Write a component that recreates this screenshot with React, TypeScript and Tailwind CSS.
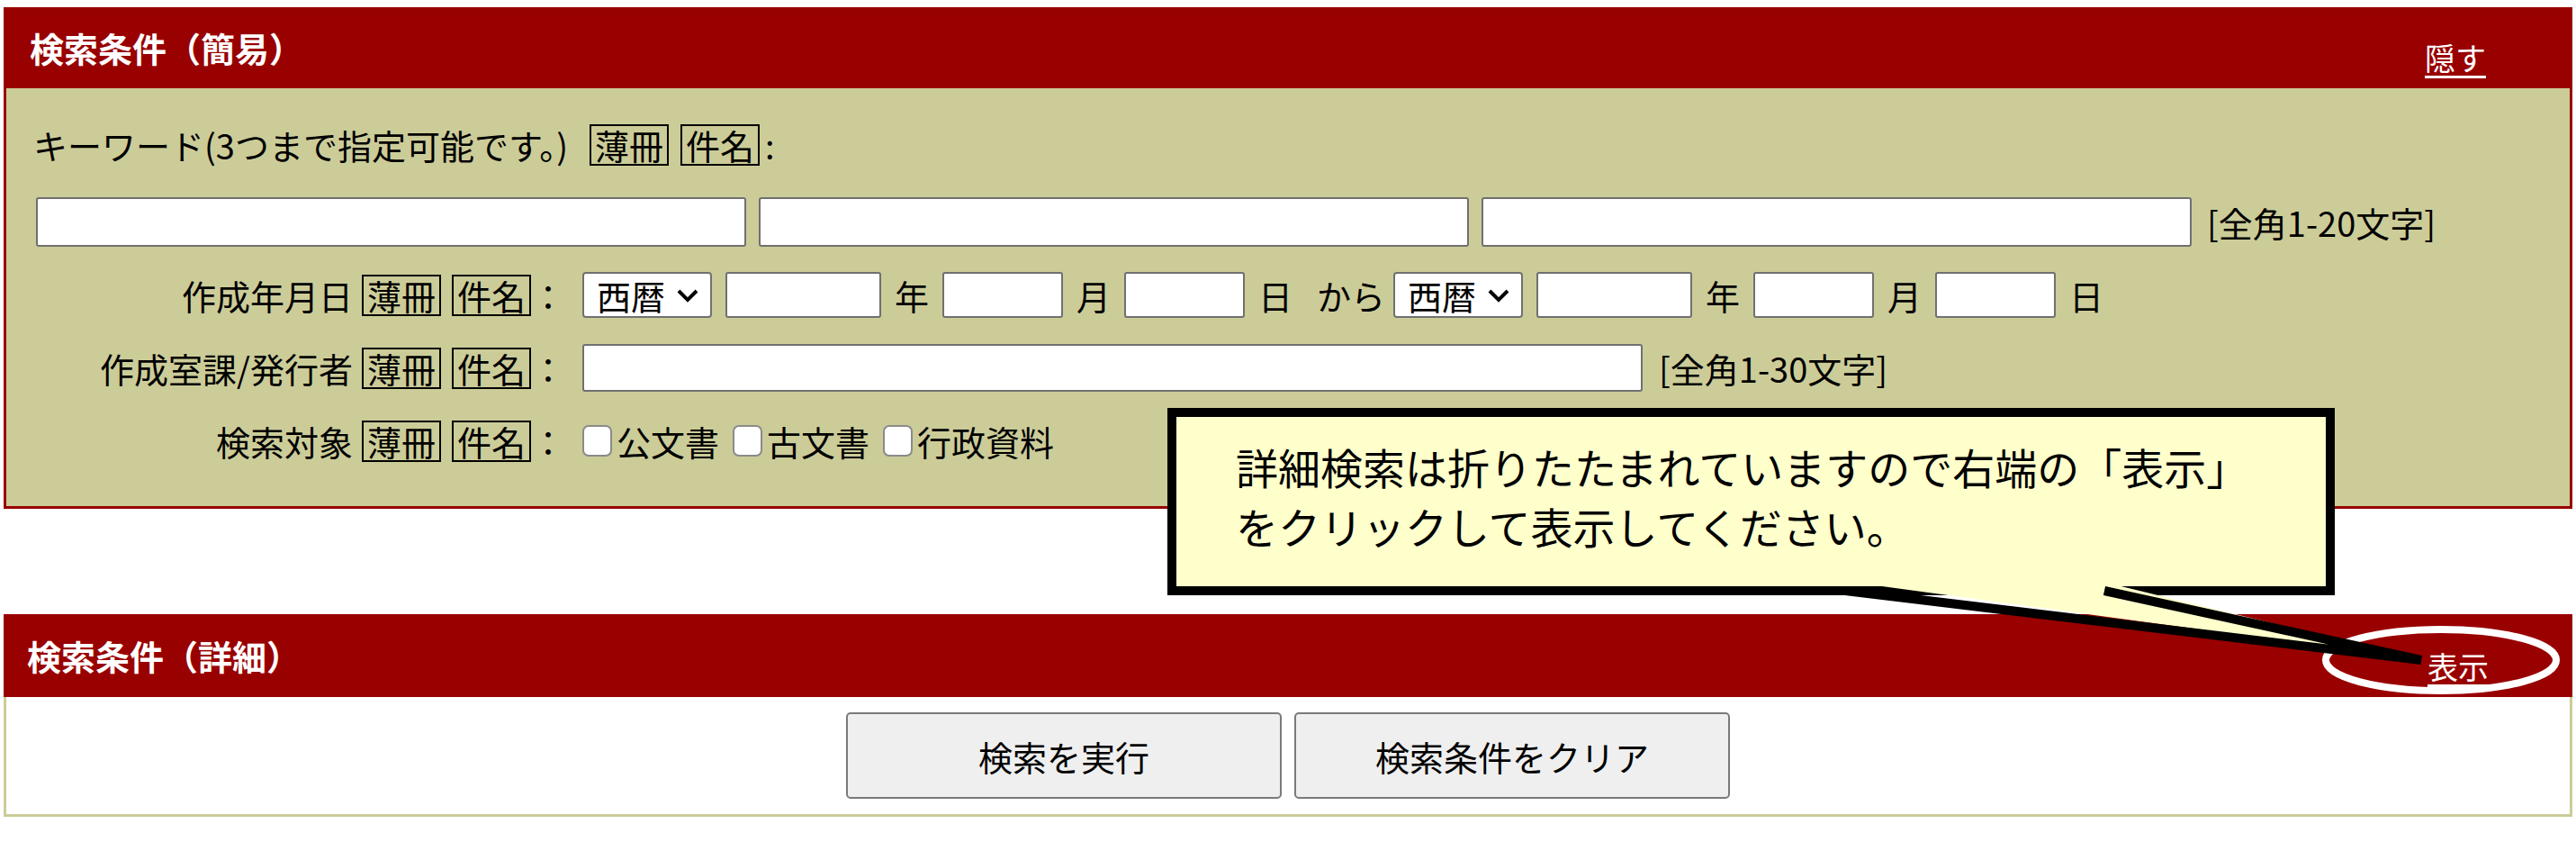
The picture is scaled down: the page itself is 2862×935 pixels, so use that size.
import React from "react";

const Tag = ({ children }: { children: React.ReactNode }) => (
  <span className="inline-flex h-[46px] items-center border-2 border-black px-[4px] leading-none">
    {children}
  </span>
);

const Field = ({ w, h = "h-[51px]" }: { w: string; h?: string }) => (
  <input
    type="text"
    className={`${w} ${h} rounded-[3px] border-2 border-[#707070] bg-white px-2 outline-none`}
  />
);

const Era = () => (
  <div className="flex h-[51px] w-[144px] items-center justify-between rounded-[4px] border-2 border-[#707070] bg-white pl-[14px] pr-[12px]">
    <span>西暦</span>
    <svg width="26" height="18" viewBox="0 0 26 18">
      <path d="M3 4 L13 14 L23 4" fill="none" stroke="#000" strokeWidth="4" />
    </svg>
  </div>
);

const Check = ({ label }: { label: string }) => (
  <label className="flex items-center">
    <span className="h-[35px] w-[33px] rounded-[7px] border-2 border-[#8a8a8a] bg-white" />
    <span className="ml-[5px]">{label}</span>
  </label>
);

const RowLabel = ({ text }: { text: string }) => (
  <div className="flex w-[621px] items-center justify-end">
    <span>{text}</span>
    <span className="ml-[10px]">
      <Tag>薄冊</Tag>
    </span>
    <span className="ml-[12px]">
      <Tag>件名</Tag>
    </span>
    <span>：</span>
  </div>
);

const DateGroup = () => (
  <>
    <Era />
    <Field w="w-[173px]" />
    <span>年</span>
    <Field w="w-[134px]" />
    <span>月</span>
    <Field w="w-[134px]" />
    <span>日</span>
  </>
);

export default function App() {
  return (
    <div className="relative h-[935px] w-[2862px] bg-white px-[4px] pt-[8px] font-['Noto_Sans_CJK_JP','Noto_Sans',sans-serif] text-[38px] text-black">
      {/* 簡易検索 */}
      <section className="border-x-[3px] border-b-[3px] border-[#990000]">
        <div className="flex h-[90px] items-center justify-between bg-[#990000] pl-[26px] pr-[93px] text-white">
          <h2 className="text-[38px] font-bold leading-none">検索条件（簡易）</h2>
          <a className="pt-[22px] text-[34px] leading-[40px] underline underline-offset-[6px]">隠す</a>
        </div>
        <div className="bg-[#cccc99] pb-[32px] pt-[38px]">
          <div className="flex h-[48px] items-center pl-[30px]">
            <span>キーワード(3つまで指定可能です。)</span>
            <span className="ml-[24px]">
              <Tag>薄冊</Tag>
            </span>
            <span className="ml-[13px]">
              <Tag>件名</Tag>
            </span>
            <span className="ml-[6px]">:</span>
          </div>
          <div className="mt-[34px] flex items-center gap-[14px] pl-[33px]">
            <Field w="w-[789px]" h="h-[55px]" />
            <Field w="w-[789px]" h="h-[55px]" />
            <Field w="w-[789px]" h="h-[55px]" />
            <span className="ml-[3px]">[全角1-20文字]</span>
          </div>
          <div className="mt-[12px] flex flex-col">
            <div className="flex h-[81px] items-center gap-[19px]">
              <RowLabel text="作成年月日" />
              <div className="flex items-center gap-[15px]">
                <DateGroup />
                <span className="ml-[12px] mr-[-6px]">から</span>
                <DateGroup />
              </div>
            </div>
            <div className="flex h-[81px] items-center gap-[19px]">
              <RowLabel text="作成室課/発行者" />
              <div className="flex items-center gap-[18px]">
                <Field w="w-[1178px]" h="h-[53px]" />
                <span>[全角1-30文字]</span>
              </div>
            </div>
            <div className="flex h-[81px] items-center gap-[19px]">
              <RowLabel text="検索対象" />
              <div className="flex items-center gap-[15px]">
                <Check label="公文書" />
                <Check label="古文書" />
                <Check label="行政資料" />
              </div>
            </div>
          </div>
        </div>
      </section>

      {/* 詳細検索（折りたたみ） */}
      <section className="mt-[117px]">
        <div className="flex h-[92px] items-center justify-between bg-[#990000] pl-[26px] pr-[93px] text-white">
          <h2 className="text-[38px] font-bold leading-none">検索条件（詳細）</h2>
          <a className="pt-[24px] text-[34px] leading-[40px] underline underline-offset-[6px]">表示</a>
        </div>
        <div className="flex justify-center gap-[14px] border-x-[3px] border-b-[3px] border-[#cccc99] bg-white py-[17px]">
          <button className="h-[96px] w-[484px] rounded-[5px] border-2 border-[#7a7a7a] bg-[#efefef]">
            検索を実行
          </button>
          <button className="h-[96px] w-[484px] rounded-[5px] border-2 border-[#7a7a7a] bg-[#efefef]">
            検索条件をクリア
          </button>
        </div>
      </section>

      {/* 吹き出し */}
      <div className="absolute left-[1297px] top-[453px] h-[208px] w-[1297px] border-[10px] border-black bg-[#ffffcc] pl-[66px] pt-[22px] text-[47px] leading-[66px] whitespace-nowrap">
        詳細検索は折りたたまれていますので右端の「表示」
        <br />
        をクリックして表示してください。
      </div>
      <svg
        className="pointer-events-none absolute left-0 top-0"
        width="2862"
        height="935"
        viewBox="0 0 2862 935"
      >
        <ellipse cx="2712" cy="733" rx="128" ry="34" fill="none" stroke="#fff" strokeWidth="8" />
        <polygon points="2054,646 2336,646 2688,732" fill="#ffffcc" />
        <path
          d="M2050 656 L2690 733 L2338 656"
          fill="none"
          stroke="#000"
          strokeWidth="10"
          strokeLinejoin="bevel"
        />
      </svg>
    </div>
  );
}
